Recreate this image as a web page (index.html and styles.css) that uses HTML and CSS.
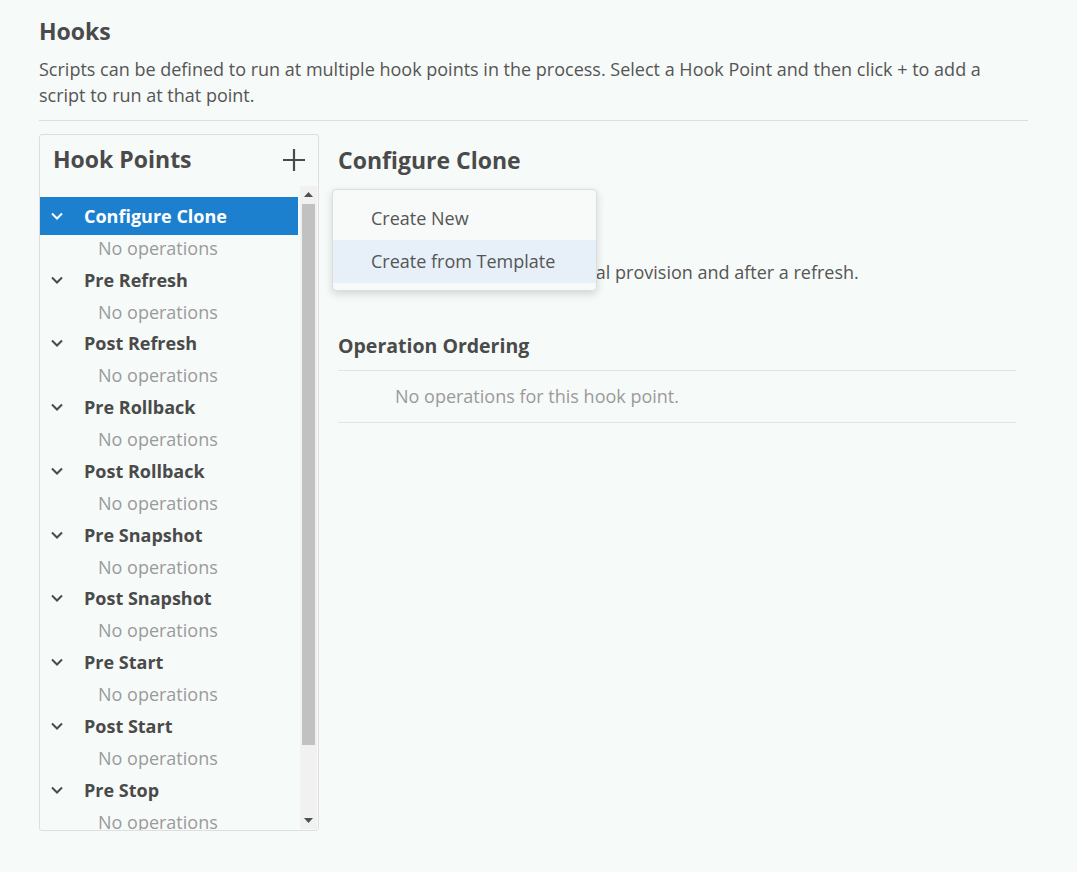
FILE: index.html
```html
<!DOCTYPE html>
<html>
<head>
<meta charset="utf-8">
<link rel="stylesheet" href="styles.css">
</head>
<body>
<div class="page">
  <h1 class="title">Hooks</h1>
  <p class="intro">Scripts can be defined to run at multiple hook points in the process. Select a Hook Point and then click + to add a script to run at that point.</p>
  <hr class="divider">
  <div class="layout">
    <div class="panel">
      <div class="panel-head">
        <span class="panel-title">Hook Points</span>
        <svg class="plus" width="24" height="24" viewBox="0 0 24 24"><path d="M12 1v22M1 12h22" stroke="#4a4a4a" stroke-width="2.2" fill="none"/></svg>
      </div>
      <div class="list-wrap">
        <div class="list">
          <div class="hook selected"><svg class="chev" width="14" height="10" viewBox="0 0 14 10"><path d="M2 2.5l5 5 5-5" stroke="currentColor" stroke-width="2" fill="none"/></svg><span>Configure Clone</span></div>
          <div class="empty">No operations</div>
          <div class="hook"><svg class="chev" width="14" height="10" viewBox="0 0 14 10"><path d="M2 2.5l5 5 5-5" stroke="currentColor" stroke-width="2" fill="none"/></svg><span>Pre Refresh</span></div>
          <div class="empty">No operations</div>
          <div class="hook"><svg class="chev" width="14" height="10" viewBox="0 0 14 10"><path d="M2 2.5l5 5 5-5" stroke="currentColor" stroke-width="2" fill="none"/></svg><span>Post Refresh</span></div>
          <div class="empty">No operations</div>
          <div class="hook"><svg class="chev" width="14" height="10" viewBox="0 0 14 10"><path d="M2 2.5l5 5 5-5" stroke="currentColor" stroke-width="2" fill="none"/></svg><span>Pre Rollback</span></div>
          <div class="empty">No operations</div>
          <div class="hook"><svg class="chev" width="14" height="10" viewBox="0 0 14 10"><path d="M2 2.5l5 5 5-5" stroke="currentColor" stroke-width="2" fill="none"/></svg><span>Post Rollback</span></div>
          <div class="empty">No operations</div>
          <div class="hook"><svg class="chev" width="14" height="10" viewBox="0 0 14 10"><path d="M2 2.5l5 5 5-5" stroke="currentColor" stroke-width="2" fill="none"/></svg><span>Pre Snapshot</span></div>
          <div class="empty">No operations</div>
          <div class="hook"><svg class="chev" width="14" height="10" viewBox="0 0 14 10"><path d="M2 2.5l5 5 5-5" stroke="currentColor" stroke-width="2" fill="none"/></svg><span>Post Snapshot</span></div>
          <div class="empty">No operations</div>
          <div class="hook"><svg class="chev" width="14" height="10" viewBox="0 0 14 10"><path d="M2 2.5l5 5 5-5" stroke="currentColor" stroke-width="2" fill="none"/></svg><span>Pre Start</span></div>
          <div class="empty">No operations</div>
          <div class="hook"><svg class="chev" width="14" height="10" viewBox="0 0 14 10"><path d="M2 2.5l5 5 5-5" stroke="currentColor" stroke-width="2" fill="none"/></svg><span>Post Start</span></div>
          <div class="empty">No operations</div>
          <div class="hook"><svg class="chev" width="14" height="10" viewBox="0 0 14 10"><path d="M2 2.5l5 5 5-5" stroke="currentColor" stroke-width="2" fill="none"/></svg><span>Pre Stop</span></div>
          <div class="empty">No operations</div>
          <div class="hook"><svg class="chev" width="14" height="10" viewBox="0 0 14 10"><path d="M2 2.5l5 5 5-5" stroke="currentColor" stroke-width="2" fill="none"/></svg><span>Post Stop</span></div>
          <div class="empty">No operations</div>
        </div>
        <div class="scrollbar">
          <div class="sb-btn"><svg width="9" height="5" viewBox="0 0 9 5"><path d="M0 5L4.5 0L9 5z" fill="#505050"/></svg></div>
          <div class="sb-track"><div class="sb-thumb"></div></div>
          <div class="sb-btn"><svg width="9" height="5" viewBox="0 0 9 5"><path d="M0 0L4.5 5L9 0z" fill="#505050"/></svg></div>
        </div>
      </div>
    </div>
    <div class="detail">
      <h2 class="detail-title">Configure Clone</h2>
      <p class="detail-desc">Operations all run after an initial provision and after a refresh.</p>
      <h3 class="section-title">Operation Ordering</h3>
      <div class="ops">
        <div class="ops-empty">No operations for this hook point.</div>
      </div>
      <div class="menu">
        <div class="menu-item">Create New</div>
        <div class="menu-item active">Create from Template</div>
      </div>
    </div>
  </div>
</div>
</body>
</html>
```

FILE: styles.css
```css
html, body {
  margin: 0;
  padding: 0;
  background: #f6faf8;
  font-family: "Open Sans", "Noto Sans", sans-serif;
  color: #555;
}
.page {
  padding: 15px 49px 0 39px;
}
.title {
  margin: 0;
  font-size: 23px;
  line-height: 32px;
  font-weight: 700;
  color: #4a4a4a;
}
.intro {
  margin: 9px 0 0 0;
  font-size: 18px;
  line-height: 26px;
  color: #555;
}
.divider {
  margin: 12px 0 0 0;
  border: 0;
  border-top: 1px solid #dcdfde;
  height: 0;
}
.layout {
  margin-top: 13px;
  display: flex;
  gap: 19px;
  align-items: flex-start;
}
.panel {
  width: 278px;
  height: 695px;
  border: 1px solid #dcdfde;
  border-radius: 3px;
  display: flex;
  flex-direction: column;
  flex: none;
}
.panel-head {
  height: 51px;
  display: flex;
  align-items: center;
  justify-content: space-between;
  padding: 0 12px 0 13px;
  flex: none;
}
.panel-title {
  font-size: 23px;
  font-weight: 700;
  color: #4a4a4a;
  margin-top: -3px;
}
.plus {
  margin-top: -2px;
}
.list-wrap {
  flex: 1;
  min-height: 0;
  display: flex;
}
.list {
  flex: 1;
  min-width: 0;
  overflow: hidden;
  padding-top: 11px;
}
.scrollbar {
  width: 17px;
  flex: none;
  background: #f1f1f1;
  display: flex;
  flex-direction: column;
  margin-left: 2px;
  margin-right: 1px;
  margin-bottom: 1px;
}
.sb-btn {
  height: 17px;
  display: flex;
  align-items: center;
  justify-content: center;
  flex: none;
}
.sb-track {
  flex: 1;
  padding: 1px 2px 0 2px;
}
.sb-thumb {
  height: 541px;
  background: #c1c1c1;
}
.hook {
  height: 37.75px;
  display: flex;
  align-items: center;
  font-size: 18px;
  font-weight: 700;
  color: #4a4a4a;
}
.hook .chev {
  margin-left: 10px;
  margin-right: 20px;
  color: #4a4a4a;
  flex: none;
}
.hook.selected {
  background: #1c80cf;
  color: #fff;
}
.hook.selected .chev {
  color: #fff;
}
.empty {
  height: 26px;
  line-height: 26px;
  padding-left: 58px;
  font-size: 18px;
  color: #9b9b9b;
  white-space: nowrap;
}
.detail {
  flex: 1;
  position: relative;
  padding-right: 12px;
}
.detail-title {
  margin: 10px 0 0 0;
  font-size: 23px;
  line-height: 32px;
  font-weight: 700;
  color: #4a4a4a;
}
.detail-desc {
  margin: 83px 0 0 0;
  font-size: 18px;
  line-height: 26px;
  color: #555;
}
.section-title {
  margin: 48px 0 0 0;
  font-size: 19.5px;
  line-height: 26px;
  font-weight: 700;
  color: #4a4a4a;
}
.ops {
  margin-top: 11px;
  border-top: 1px solid #e3e6e5;
  border-bottom: 1px solid #e3e6e5;
}
.ops-empty {
  padding-left: 57px;
  height: 51px;
  line-height: 51px;
  font-size: 18px;
  color: #9b9b9b;
}
.menu {
  position: absolute;
  left: -6px;
  top: 55px;
  width: 263px;
  padding: 7px 0 7px 0;
  background: #f8faf9;
  border: 1px solid #dcdfde;
  border-radius: 4px;
  box-shadow: 0 3px 8px rgba(0, 0, 0, 0.15);
}
.menu-item {
  height: 43px;
  line-height: 43px;
  padding-left: 38px;
  font-size: 18px;
  color: #555;
}
.menu-item.active {
  background: #e7f0f8;
}
```
